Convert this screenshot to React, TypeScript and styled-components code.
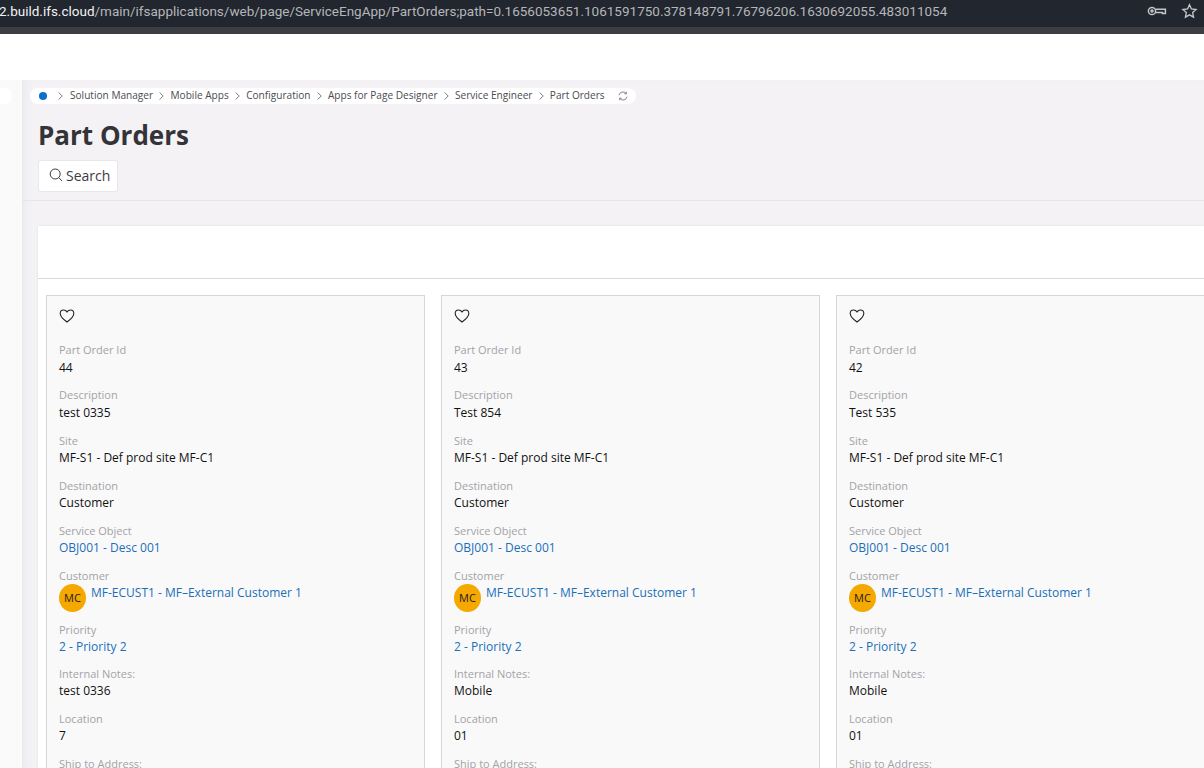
import React from "react";
import styled, { createGlobalStyle } from "styled-components";

const Global = createGlobalStyle`
  html, body { margin: 0; padding: 0; height: 100%; overflow: hidden; background: #fff; }
  body { font-family: "Open Sans", "Noto Sans", sans-serif; }
  * { box-sizing: border-box; }
`;

const Page = styled.div`
  width: 1204px;
  height: 768px;
  overflow: hidden;
  display: flex;
  flex-direction: column;
`;

const AddressBar = styled.div`
  height: 27px;
  flex: none;
  background: #22262e;
  display: flex;
  align-items: center;
  justify-content: space-between;
  padding: 0 6px 6px 0;
  font-family: "Roboto", "Liberation Sans", sans-serif;
  font-size: 13.5px;
  color: #b4b6ba;
  white-space: nowrap;
  overflow: hidden;
`;

const Url = styled.div`
  margin-left: -1px;
`;

const UrlHost = styled.span`
  color: #f1f2f3;
`;

const BarIcons = styled.div`
  display: flex;
  align-items: center;
  gap: 14px;
  color: #c4c6c9;
`;

const ToolStrip = styled.div`
  height: 7px;
  flex: none;
  background: #3c3e44;
`;

const WhiteBand = styled.div`
  height: 46px;
  flex: none;
  background: #fff;
`;

const Body = styled.div`
  flex: 1;
  display: flex;
  min-height: 0;
`;

const SideRail = styled.div`
  width: 22px;
  flex: none;
  background: #fafafa;
  padding-top: 8px;
`;

const RailPill = styled.div`
  width: 12px;
  height: 16px;
  background: #fff;
  border-radius: 0 8px 8px 0;
`;

const Main = styled.div`
  flex: 1;
  min-width: 0;
  background: #f4f2f5;
  display: flex;
  flex-direction: column;
  box-shadow: inset 8px 0 8px -6px #e6e6e8;
`;

const Header = styled.div`
  height: 121px;
  flex: none;
  padding: 8px 0 0 16px;
  border-bottom: 1px solid #e6e5e8;
`;

const Crumbs = styled.nav`
  margin-left: -8px;
  width: 606px;
  height: 16px;
  background: #fff;
  border-radius: 8px;
  display: flex;
  align-items: center;
  padding-left: 9px;
  font-size: 10.1px;
  color: #4b4b50;
  white-space: nowrap;
`;

const CrumbText = styled.span`
  padding-bottom: 3px;
`;

const CrumbDot = styled.span`
  width: 8px;
  height: 8px;
  border-radius: 50%;
  background: #0b6fd0;
  margin-right: 11px;
`;

const Chevron = styled.svg`
  width: 5px;
  height: 8px;
  margin: 0 6.2px;
  flex: none;
`;

const FirstChevron = styled(Chevron)`
  margin: 0 7px 0 0;
`;

const Refresh = styled.span`
  display: flex;
  margin-left: 13px;
  color: #66666c;
`;

const Title = styled.h1`
  margin: 13px 0 0;
  font-size: 26px;
  line-height: 36px;
  font-weight: 700;
  color: #333338;
`;

const SearchButton = styled.button`
  margin-top: 7px;
  width: 80px;
  height: 32px;
  background: #fff;
  border: 1px solid #e8e7ea;
  border-radius: 3px;
  display: flex;
  align-items: center;
  gap: 2px;
  padding: 0 0 2px 9px;
  font: 400 14px "Open Sans", sans-serif;
  color: #3c3c42;
`;

const Content = styled.div`
  flex: 1;
  min-height: 0;
  padding: 25px 0 0 16px;
`;

const Panel = styled.div`
  height: 100%;
  background: #fff;
  box-shadow: 0 0 2px #dcdcdf;
`;

const PanelToolbar = styled.div`
  height: 53px;
  border-bottom: 1px solid #dadada;
`;

const CardRow = styled.div`
  display: flex;
  gap: 16px;
  padding: 16px 0 0 8px;
`;

const Card = styled.article`
  width: 379px;
  flex: none;
  height: 520px;
  background: #f9f9fa;
  border: 1px solid #d6d6d6;
  padding: 12px 12px 0;
`;

const Favourite = styled.svg`
  display: block;
  width: 16px;
  height: 16px;
  margin-bottom: 17.3px;
`;

const Field = styled.div<{ $gap?: number }>`
  margin-bottom: ${(p) => p.$gap ?? 10.9}px;
`;

const Label = styled.div`
  font-size: 11px;
  line-height: 17.3px;
  color: #a3a3a6;
`;

const Value = styled.div<{ $link?: boolean }>`
  font-size: 12px;
  line-height: 17px;
  color: ${(p) => (p.$link ? "#1a6fb8" : "#111")};
`;

const CustomerRow = styled.div`
  display: flex;
  align-items: flex-start;
  gap: 5px;
  margin-top: -1px;
`;

const Avatar = styled.div`
  width: 27px;
  height: 28px;
  border-radius: 50%;
  background: #f5a800;
  color: #1c1c1c;
  font-size: 11px;
  display: flex;
  align-items: center;
  justify-content: center;
  flex: none;
`;

const ChevronIcon = ({ first }: { first?: boolean }) => {
  const C = first ? FirstChevron : Chevron;
  return (
    <C viewBox="0 0 5 8">
      <path d="M0.7 0.5 L4.2 4 L0.7 7.5" fill="none" stroke="#55555a" strokeWidth="0.8" />
    </C>
  );
};

const crumbs = ["Solution Manager", "Mobile Apps", "Configuration", "Apps for Page Designer", "Service Engineer", "Part Orders"];

const orders = [
  { id: "44", desc: "test 0335", notes: "test 0336", loc: "7" },
  { id: "43", desc: "Test 854", notes: "Mobile", loc: "01" },
  { id: "42", desc: "Test 535", notes: "Mobile", loc: "01" },
];

export default function App() {
  return (
    <Page>
      <Global />
      <AddressBar>
        <Url>
          <UrlHost>2.build.ifs.cloud</UrlHost>/main/ifsapplications/web/page/ServiceEngApp/PartOrders;path=0.1656053651.1061591750.378148791.76796206.1630692055.483011054
        </Url>
        <BarIcons>
          <svg width="20" height="12" viewBox="0 0 20 12" fill="none" stroke="currentColor" strokeWidth="1.5">
            <circle cx="5" cy="6" r="3.6" />
            <circle cx="5" cy="6" r="1" fill="currentColor" />
            <path d="M8.6 4.2 H18.4 V8.6 H15.4 V7.4 H8.6" />
          </svg>
          <svg width="17" height="16" viewBox="0 0 24 24" fill="none" stroke="currentColor" strokeWidth="2">
            <path d="M12 2.5 l2.9 6.4 7 .8 -5.2 4.7 1.4 6.9 -6.1-3.5 -6.1 3.5 1.4-6.9 -5.2-4.7 7-.8z" />
          </svg>
        </BarIcons>
      </AddressBar>
      <ToolStrip />
      <WhiteBand />
      <Body>
        <SideRail>
          <RailPill />
        </SideRail>
        <Main>
          <Header>
            <Crumbs>
              <CrumbDot />
              <ChevronIcon first />
              {crumbs.map((c, i) => (
                <React.Fragment key={c}>
                  {i > 0 && <ChevronIcon />}
                  <CrumbText>{c}</CrumbText>
                </React.Fragment>
              ))}
              <Refresh>
                <svg width="10" height="10" viewBox="0 0 10 10" fill="none" stroke="currentColor" strokeWidth="0.8">
                  <path d="M1 4.2 A4 4 0 0 1 8 2.4 M9 5.8 A4 4 0 0 1 2 7.6" />
                  <path d="M8.4 0.8 V2.8 H6.4 M1.6 9.2 V7.2 H3.6" />
                </svg>
              </Refresh>
            </Crumbs>
            <Title>Part Orders</Title>
            <SearchButton>
              <svg width="16" height="16" viewBox="0 0 16 16" fill="none" stroke="#3c3c42" strokeWidth="1">
                <circle cx="7.2" cy="7" r="5" />
                <path d="M10.8 10.6 L14 14" />
              </svg>
              Search
            </SearchButton>
          </Header>
          <Content>
            <Panel>
              <PanelToolbar />
              <CardRow>
                {orders.map((o) => (
                  <Card key={o.id}>
                    <Favourite viewBox="0 0 16 16">
                      <path
                        d="M8 14 C4 11 1.2 8.6 1.2 5.4 C1.2 3.3 2.8 2 4.6 2 C6 2 7.2 2.7 8 3.9 C8.8 2.7 10 2 11.4 2 C13.2 2 14.8 3.3 14.8 5.4 C14.8 8.6 12 11 8 14 Z"
                        fill="none"
                        stroke="#222"
                        strokeWidth="1.1"
                      />
                    </Favourite>
                    <Field>
                      <Label>Part Order Id</Label>
                      <Value>{o.id}</Value>
                    </Field>
                    <Field>
                      <Label>Description</Label>
                      <Value>{o.desc}</Value>
                    </Field>
                    <Field>
                      <Label>Site</Label>
                      <Value>MF-S1 - Def prod site MF-C1</Value>
                    </Field>
                    <Field>
                      <Label>Destination</Label>
                      <Value>Customer</Value>
                    </Field>
                    <Field>
                      <Label>Service Object</Label>
                      <Value $link>OBJ001 - Desc 001</Value>
                    </Field>
                    <Field $gap={9.4}>
                      <Label>Customer</Label>
                      <CustomerRow>
                        <Avatar>MC</Avatar>
                        <Value $link>MF-ECUST1 - MF–External Customer 1</Value>
                      </CustomerRow>
                    </Field>
                    <Field $gap={9.7}>
                      <Label>Priority</Label>
                      <Value $link>2 - Priority 2</Value>
                    </Field>
                    <Field>
                      <Label>Internal Notes:</Label>
                      <Value>{o.notes}</Value>
                    </Field>
                    <Field>
                      <Label>Location</Label>
                      <Value>{o.loc}</Value>
                    </Field>
                    <Field>
                      <Label>Ship to Address:</Label>
                    </Field>
                  </Card>
                ))}
              </CardRow>
            </Panel>
          </Content>
        </Main>
      </Body>
    </Page>
  );
}
